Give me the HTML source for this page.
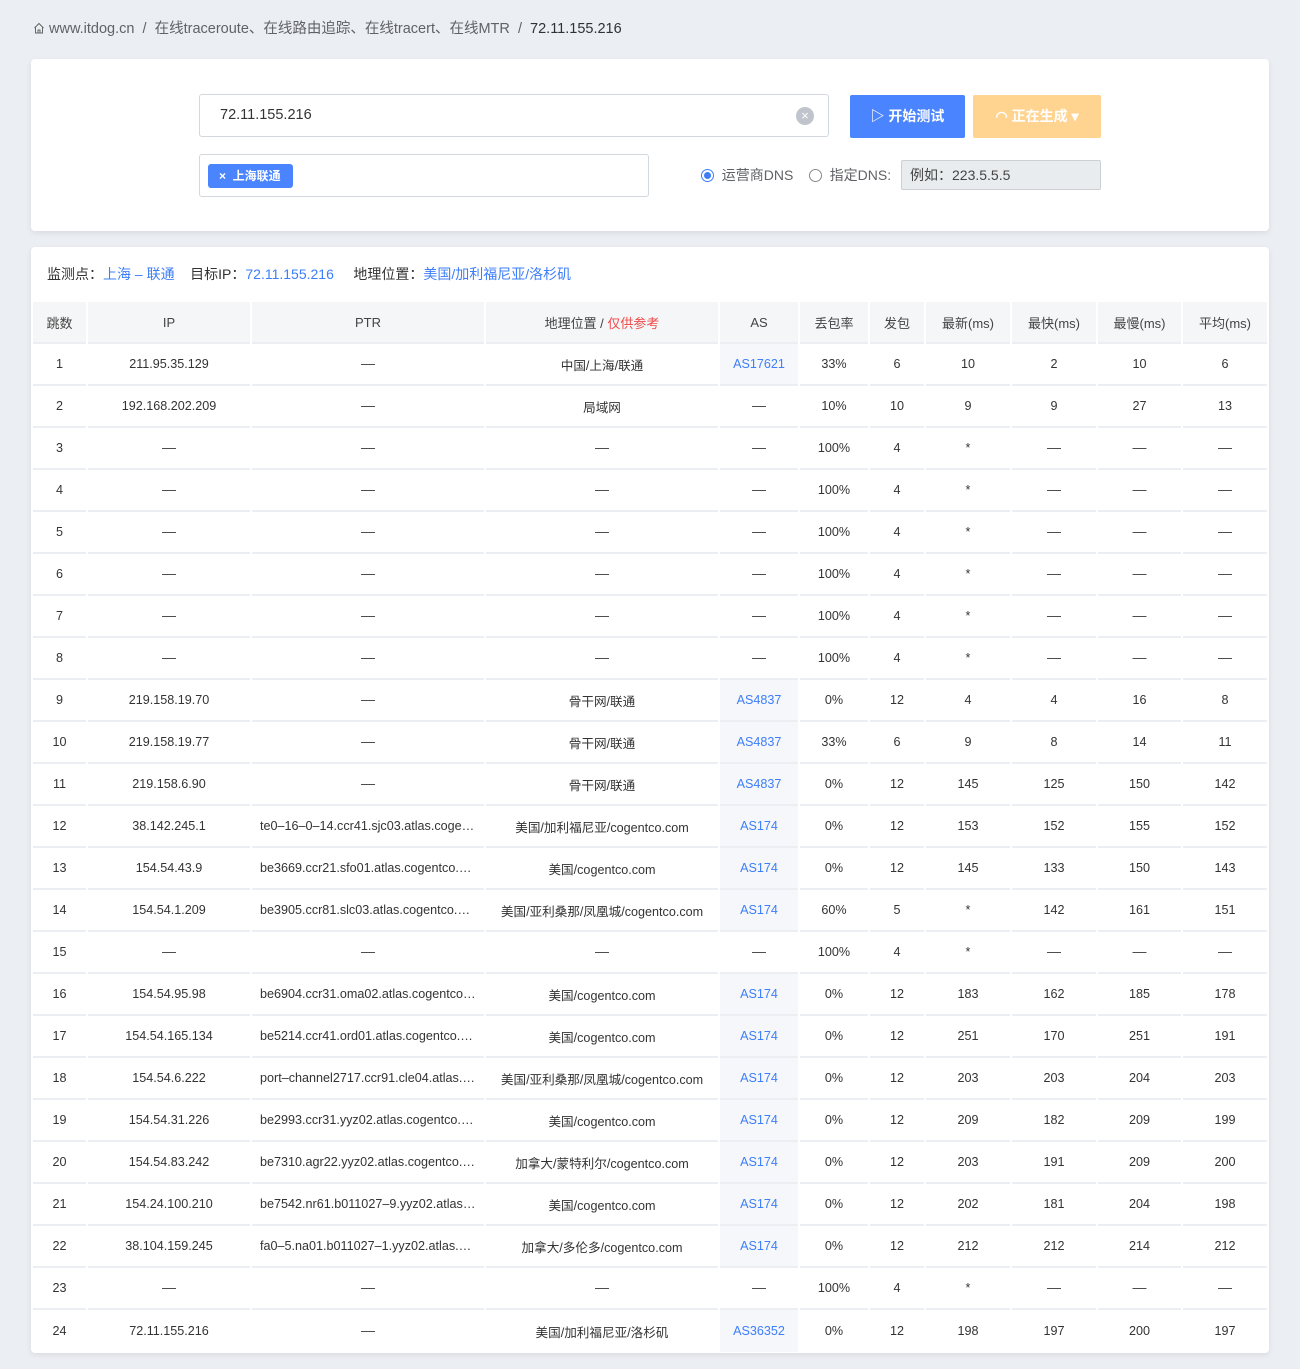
<!DOCTYPE html>
<html><head><meta charset="utf-8">
<style>
*{box-sizing:border-box;margin:0;padding:0}
body{width:1300px;height:1369px;background:#ebeef3;font-family:"Liberation Sans","Noto Sans CJK SC",sans-serif;color:#333;position:relative;overflow:hidden}
.bc{position:absolute;left:33px;top:20px;font-size:14.5px;color:#606266;line-height:18px}
.bc b{font-weight:normal;color:#303133}
.card{position:absolute;left:31px;width:1238px;background:#fff;border-radius:4px;box-shadow:0 2px 6px rgba(0,0,0,.08)}
.abs{position:absolute}
.inp{border:1px solid #d3d7de;border-radius:3px;background:#fff}
.blue{color:#3d7efa}
table{position:absolute;left:0;top:55px;border-collapse:separate;border-spacing:2px 0;font-size:12.6px;table-layout:fixed;width:1238px}
td,th{height:42px;text-align:center;border-bottom:2px solid #ebeef2;font-weight:normal;white-space:nowrap;overflow:hidden;text-overflow:ellipsis}
th{background:#f5f6f7;font-size:13px;color:#444;height:42px}
td{color:#333}
td.p{text-align:left;padding-left:8px;padding-right:8px}
td.a{background:#f5f7fa;color:#3d7efa}
</style></head><body>
<div class="bc"><svg width="12" height="12" viewBox="0 0 12 12" style="vertical-align:-1px"><path d="M1.5 6L6 1.5 10.5 6M2.5 5v6h7V5M5 11V8h2v3" fill="none" stroke="#666" stroke-width="1"/></svg> www.itdog.cn &nbsp;/&nbsp; 在线traceroute、在线路由追踪、在线tracert、在线MTR &nbsp;/&nbsp; <b>72.11.155.216</b></div>

<div class="card" style="top:59px;height:172px">
 <div class="abs inp" style="left:168px;top:35px;width:630px;height:43px;font-size:14.5px;line-height:41px;padding-left:20px;color:#333">72.11.155.216
  <span class="abs" style="right:14px;top:12px;width:18px;height:18px;border-radius:50%;background:#c0c4cc;color:#fff;font-size:13px;line-height:18px;text-align:center">×</span></div>
 <div class="abs" style="left:819px;top:36px;width:115px;height:43px;background:#4a84ff;border-radius:2px;color:#fff;font-size:14px;line-height:43px;text-align:center;font-weight:bold">▷ 开始测试</div>
 <div class="abs" style="left:942px;top:36px;width:128px;height:43px;background:#ffd491;border-radius:2px;color:#fff;font-size:14px;line-height:43px;text-align:center;font-weight:bold">◠ 正在生成 ▾</div>
 <div class="abs inp" style="left:168px;top:95px;width:450px;height:43px">
  <span class="abs" style="left:8px;top:9px;width:85px;height:24px;background:#4a84ff;border-radius:3px;color:#fff;font-size:12px;line-height:24px;padding-left:11px;font-weight:bold">×&nbsp;&nbsp;上海联通</span></div>
 <div class="abs" style="left:670px;top:108px;font-size:14px;color:#606266;line-height:16px">
  <span style="display:inline-block;width:13px;height:13px;border-radius:50%;border:1px solid #3d7efa;vertical-align:-2px;position:relative"><span style="position:absolute;left:2px;top:2px;width:7px;height:7px;border-radius:50%;background:#3d7efa"></span></span>&nbsp; 运营商DNS &nbsp;&nbsp;
  <span style="display:inline-block;width:13px;height:13px;border-radius:50%;border:1px solid #888;vertical-align:-2px"></span>&nbsp; 指定DNS:</div>
 <div class="abs" style="left:870px;top:101px;width:200px;height:30px;background:#e9ecef;border:1px solid #ccd0d5;border-radius:2px;font-size:14px;line-height:28px;padding-left:8px;color:#444">例如：223.5.5.5</div>
</div>

<div class="card" style="top:247px;height:1106px">
 <div class="abs" style="left:16px;top:17px;font-size:14px;color:#333">监测点：<span class="blue">上海 – 联通</span>&nbsp;&nbsp;&nbsp; 目标IP：<span class="blue">72.11.155.216</span>&nbsp;&nbsp;&nbsp;&nbsp; 地理位置：<span class="blue">美国/加利福尼亚/洛杉矶</span></div>
 <table>
 <colgroup><col style="width:53px"><col style="width:162px"><col style="width:232px"><col style="width:232px"><col style="width:78px"><col style="width:68px"><col style="width:54px"><col style="width:84px"><col style="width:84px"><col style="width:83px"><col style="width:84px"></colgroup>
 <tr><th>跳数</th><th>IP</th><th>PTR</th><th>地理位置 / <span style="color:#f04b4b">仅供参考</span></th><th>AS</th><th>丢包率</th><th>发包</th><th>最新(ms)</th><th>最快(ms)</th><th>最慢(ms)</th><th>平均(ms)</th></tr>
 <tr><td>1</td><td>211.95.35.129</td><td>––</td><td>中国/上海/联通</td><td class="a">AS17621</td><td>33%</td><td>6</td><td>10</td><td>2</td><td>10</td><td>6</td></tr>
 <tr><td>2</td><td>192.168.202.209</td><td>––</td><td>局域网</td><td>––</td><td>10%</td><td>10</td><td>9</td><td>9</td><td>27</td><td>13</td></tr>
 <tr><td>3</td><td>––</td><td>––</td><td>––</td><td>––</td><td>100%</td><td>4</td><td>*</td><td>––</td><td>––</td><td>––</td></tr>
 <tr><td>4</td><td>––</td><td>––</td><td>––</td><td>––</td><td>100%</td><td>4</td><td>*</td><td>––</td><td>––</td><td>––</td></tr>
 <tr><td>5</td><td>––</td><td>––</td><td>––</td><td>––</td><td>100%</td><td>4</td><td>*</td><td>––</td><td>––</td><td>––</td></tr>
 <tr><td>6</td><td>––</td><td>––</td><td>––</td><td>––</td><td>100%</td><td>4</td><td>*</td><td>––</td><td>––</td><td>––</td></tr>
 <tr><td>7</td><td>––</td><td>––</td><td>––</td><td>––</td><td>100%</td><td>4</td><td>*</td><td>––</td><td>––</td><td>––</td></tr>
 <tr><td>8</td><td>––</td><td>––</td><td>––</td><td>––</td><td>100%</td><td>4</td><td>*</td><td>––</td><td>––</td><td>––</td></tr>
 <tr><td>9</td><td>219.158.19.70</td><td>––</td><td>骨干网/联通</td><td class="a">AS4837</td><td>0%</td><td>12</td><td>4</td><td>4</td><td>16</td><td>8</td></tr>
 <tr><td>10</td><td>219.158.19.77</td><td>––</td><td>骨干网/联通</td><td class="a">AS4837</td><td>33%</td><td>6</td><td>9</td><td>8</td><td>14</td><td>11</td></tr>
 <tr><td>11</td><td>219.158.6.90</td><td>––</td><td>骨干网/联通</td><td class="a">AS4837</td><td>0%</td><td>12</td><td>145</td><td>125</td><td>150</td><td>142</td></tr>
 <tr><td>12</td><td>38.142.245.1</td><td class="p">te0–16–0–14.ccr41.sjc03.atlas.cogentco.com</td><td>美国/加利福尼亚/cogentco.com</td><td class="a">AS174</td><td>0%</td><td>12</td><td>153</td><td>152</td><td>155</td><td>152</td></tr>
 <tr><td>13</td><td>154.54.43.9</td><td class="p">be3669.ccr21.sfo01.atlas.cogentco.com</td><td>美国/cogentco.com</td><td class="a">AS174</td><td>0%</td><td>12</td><td>145</td><td>133</td><td>150</td><td>143</td></tr>
 <tr><td>14</td><td>154.54.1.209</td><td class="p">be3905.ccr81.slc03.atlas.cogentco.com</td><td>美国/亚利桑那/凤凰城/cogentco.com</td><td class="a">AS174</td><td>60%</td><td>5</td><td>*</td><td>142</td><td>161</td><td>151</td></tr>
 <tr><td>15</td><td>––</td><td>––</td><td>––</td><td>––</td><td>100%</td><td>4</td><td>*</td><td>––</td><td>––</td><td>––</td></tr>
 <tr><td>16</td><td>154.54.95.98</td><td class="p">be6904.ccr31.oma02.atlas.cogentco.com</td><td>美国/cogentco.com</td><td class="a">AS174</td><td>0%</td><td>12</td><td>183</td><td>162</td><td>185</td><td>178</td></tr>
 <tr><td>17</td><td>154.54.165.134</td><td class="p">be5214.ccr41.ord01.atlas.cogentco.com</td><td>美国/cogentco.com</td><td class="a">AS174</td><td>0%</td><td>12</td><td>251</td><td>170</td><td>251</td><td>191</td></tr>
 <tr><td>18</td><td>154.54.6.222</td><td class="p">port–channel2717.ccr91.cle04.atlas.cogentco.com</td><td>美国/亚利桑那/凤凰城/cogentco.com</td><td class="a">AS174</td><td>0%</td><td>12</td><td>203</td><td>203</td><td>204</td><td>203</td></tr>
 <tr><td>19</td><td>154.54.31.226</td><td class="p">be2993.ccr31.yyz02.atlas.cogentco.com</td><td>美国/cogentco.com</td><td class="a">AS174</td><td>0%</td><td>12</td><td>209</td><td>182</td><td>209</td><td>199</td></tr>
 <tr><td>20</td><td>154.54.83.242</td><td class="p">be7310.agr22.yyz02.atlas.cogentco.com</td><td>加拿大/蒙特利尔/cogentco.com</td><td class="a">AS174</td><td>0%</td><td>12</td><td>203</td><td>191</td><td>209</td><td>200</td></tr>
 <tr><td>21</td><td>154.24.100.210</td><td class="p">be7542.nr61.b011027–9.yyz02.atlas.cogentco.com</td><td>美国/cogentco.com</td><td class="a">AS174</td><td>0%</td><td>12</td><td>202</td><td>181</td><td>204</td><td>198</td></tr>
 <tr><td>22</td><td>38.104.159.245</td><td class="p">fa0–5.na01.b011027–1.yyz02.atlas.cogentco.com</td><td>加拿大/多伦多/cogentco.com</td><td class="a">AS174</td><td>0%</td><td>12</td><td>212</td><td>212</td><td>214</td><td>212</td></tr>
 <tr><td>23</td><td>––</td><td>––</td><td>––</td><td>––</td><td>100%</td><td>4</td><td>*</td><td>––</td><td>––</td><td>––</td></tr>
 <tr><td style="border:0">24</td><td style="border:0">72.11.155.216</td><td style="border:0">––</td><td style="border:0">美国/加利福尼亚/洛杉矶</td><td class="a" style="border:0">AS36352</td><td style="border:0">0%</td><td style="border:0">12</td><td style="border:0">198</td><td style="border:0">197</td><td style="border:0">200</td><td style="border:0">197</td></tr>
 </table>
</div>
</body></html>
